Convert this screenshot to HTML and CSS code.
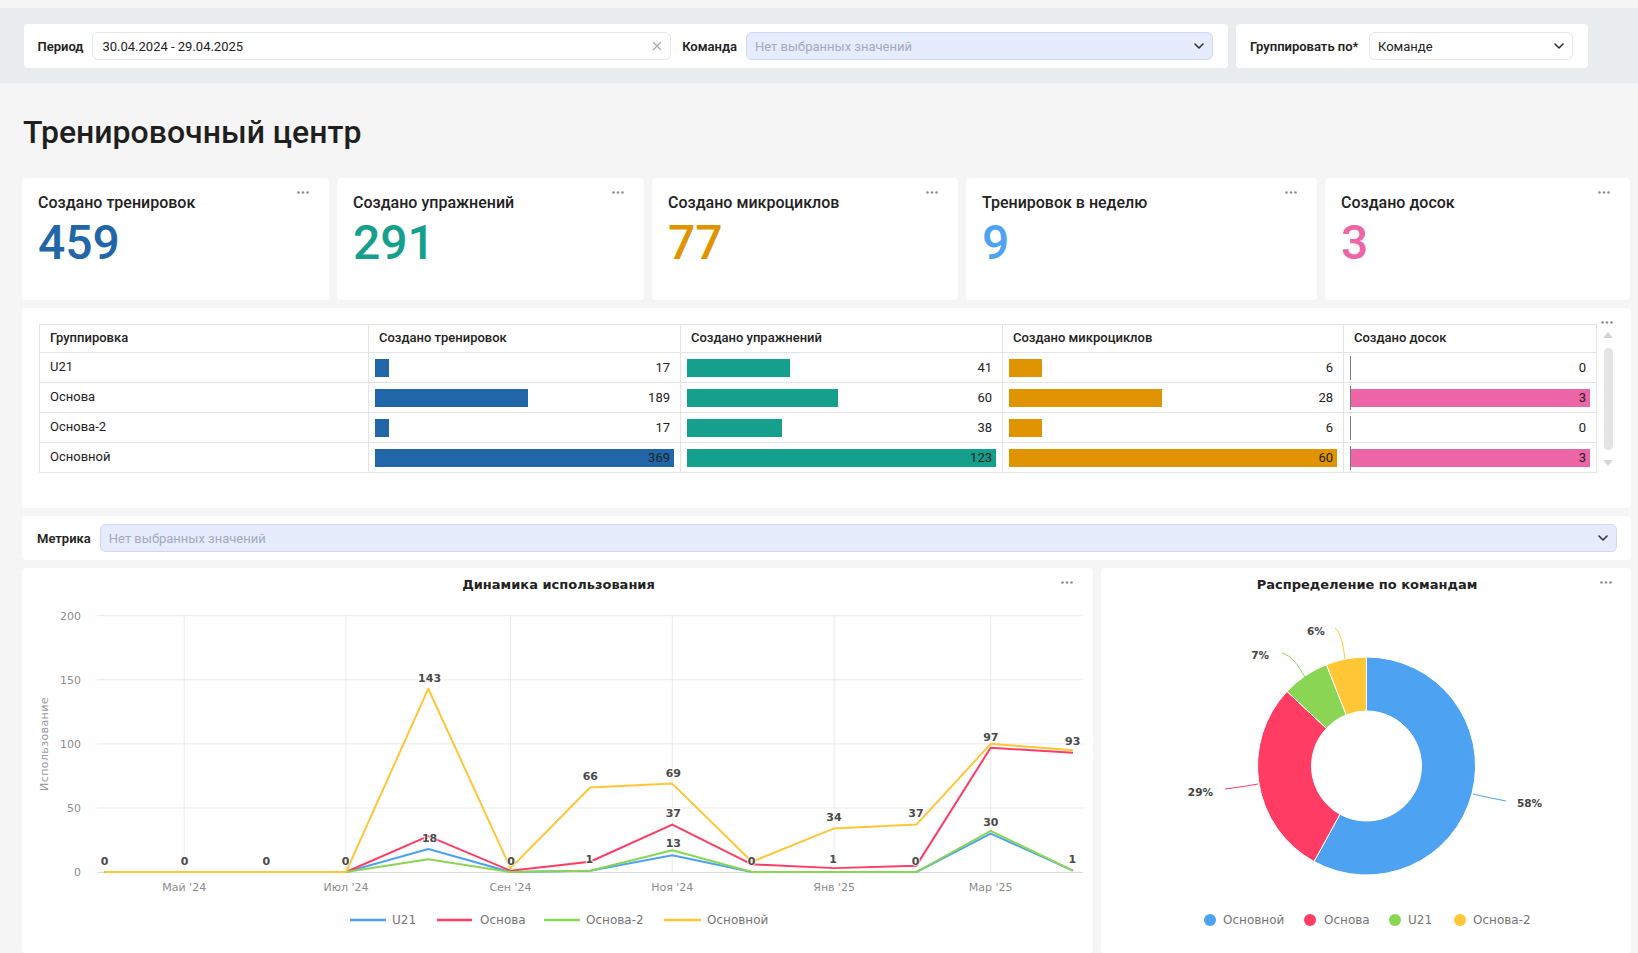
FILE: index.html
```html
<!DOCTYPE html>
<html lang="ru">
<head>
<meta charset="utf-8">
<title>Тренировочный центр</title>
<link rel="stylesheet" href="styles.css">
</head>
<body>
<header class="filters">
  <div class="fcard fcard-main">
    <span class="flabel">Период</span>
    <div class="input grow date"><span class="ival">30.04.2024 - 29.04.2025</span>
      <svg class="ico-x" viewBox="0 0 10 10" width="10" height="10"><path d="M1 1l8 8M9 1l-8 8"/></svg>
    </div>
    <span class="flabel">Команда</span>
    <div class="input select team"><span class="ph">Нет выбранных значений</span>
      <svg class="chev" viewBox="0 0 10 6" width="10" height="6"><path d="M1 1l4 4 4-4"/></svg>
    </div>
  </div>
  <div class="fcard fcard-group">
    <span class="flabel">Группировать по*</span>
    <div class="input group-sel"><span class="ival">Команде</span>
      <svg class="chev" viewBox="0 0 10 6" width="10" height="6"><path d="M1 1l4 4 4-4"/></svg>
    </div>
  </div>
</header>

<main class="main">
  <h1 class="page-title">Тренировочный центр</h1>

  <section class="kpis">
    <div class="card kpi"><div class="kpi-title">Создано тренировок</div><div class="kpi-value c-blue">459</div>
      <svg class="dots" viewBox="0 0 12 3" width="12" height="3"><circle cx="1.5" cy="1.5" r="1.3"/><circle cx="6" cy="1.5" r="1.3"/><circle cx="10.5" cy="1.5" r="1.3"/></svg></div>
    <div class="card kpi"><div class="kpi-title">Создано упражнений</div><div class="kpi-value c-teal">291</div>
      <svg class="dots" viewBox="0 0 12 3" width="12" height="3"><circle cx="1.5" cy="1.5" r="1.3"/><circle cx="6" cy="1.5" r="1.3"/><circle cx="10.5" cy="1.5" r="1.3"/></svg></div>
    <div class="card kpi"><div class="kpi-title">Создано микроциклов</div><div class="kpi-value c-orange">77</div>
      <svg class="dots" viewBox="0 0 12 3" width="12" height="3"><circle cx="1.5" cy="1.5" r="1.3"/><circle cx="6" cy="1.5" r="1.3"/><circle cx="10.5" cy="1.5" r="1.3"/></svg></div>
    <div class="card kpi"><div class="kpi-title">Тренировок в неделю</div><div class="kpi-value c-sky">9</div>
      <svg class="dots" viewBox="0 0 12 3" width="12" height="3"><circle cx="1.5" cy="1.5" r="1.3"/><circle cx="6" cy="1.5" r="1.3"/><circle cx="10.5" cy="1.5" r="1.3"/></svg></div>
    <div class="card kpi"><div class="kpi-title">Создано досок</div><div class="kpi-value c-pink">3</div>
      <svg class="dots" viewBox="0 0 12 3" width="12" height="3"><circle cx="1.5" cy="1.5" r="1.3"/><circle cx="6" cy="1.5" r="1.3"/><circle cx="10.5" cy="1.5" r="1.3"/></svg></div>
  </section>

  <section class="card table-card">
    <table class="grid">
      <colgroup><col class="w1"><col class="w2"><col class="w3"><col class="w4"><col class="w5"></colgroup>
      <thead>
        <tr><th>Группировка</th><th>Создано тренировок</th><th>Создано упражнений</th><th>Создано микроциклов</th><th>Создано досок</th></tr>
      </thead>
      <tbody>
        <tr><td class="name">U21</td>
          <td class="bc"><div class="bw"><span class="bar b-blue" style="width:4.61%"></span><span class="val">17</span></div></td>
          <td class="bc"><div class="bw"><span class="bar b-teal" style="width:33.33%"></span><span class="val">41</span></div></td>
          <td class="bc"><div class="bw"><span class="bar b-orange" style="width:10%"></span><span class="val">6</span></div></td>
          <td class="bc"><div class="bw axis"><span class="bar b-pink" style="width:0%"></span><span class="val">0</span></div></td></tr>
        <tr><td class="name">Основа</td>
          <td class="bc"><div class="bw"><span class="bar b-blue" style="width:51.22%"></span><span class="val">189</span></div></td>
          <td class="bc"><div class="bw"><span class="bar b-teal" style="width:48.78%"></span><span class="val">60</span></div></td>
          <td class="bc"><div class="bw"><span class="bar b-orange" style="width:46.67%"></span><span class="val">28</span></div></td>
          <td class="bc"><div class="bw axis"><span class="bar b-pink" style="width:100%"></span><span class="val">3</span></div></td></tr>
        <tr><td class="name">Основа-2</td>
          <td class="bc"><div class="bw"><span class="bar b-blue" style="width:4.61%"></span><span class="val">17</span></div></td>
          <td class="bc"><div class="bw"><span class="bar b-teal" style="width:30.89%"></span><span class="val">38</span></div></td>
          <td class="bc"><div class="bw"><span class="bar b-orange" style="width:10%"></span><span class="val">6</span></div></td>
          <td class="bc"><div class="bw axis"><span class="bar b-pink" style="width:0%"></span><span class="val">0</span></div></td></tr>
        <tr><td class="name">Основной</td>
          <td class="bc"><div class="bw"><span class="bar b-blue" style="width:100%"></span><span class="val">369</span></div></td>
          <td class="bc"><div class="bw"><span class="bar b-teal" style="width:100%"></span><span class="val">123</span></div></td>
          <td class="bc"><div class="bw"><span class="bar b-orange" style="width:100%"></span><span class="val">60</span></div></td>
          <td class="bc"><div class="bw axis"><span class="bar b-pink" style="width:100%"></span><span class="val">3</span></div></td></tr>
      </tbody>
    </table>
    <div class="scrollbar"><span class="arrow up"></span><span class="thumb"></span><span class="arrow down"></span></div>
    <svg class="dots dots-table" viewBox="0 0 12 3" width="12" height="3"><circle cx="1.5" cy="1.5" r="1.3"/><circle cx="6" cy="1.5" r="1.3"/><circle cx="10.5" cy="1.5" r="1.3"/></svg>
  </section>

  <section class="card fcard metric">
    <span class="flabel">Метрика</span>
    <div class="input select grow"><span class="ph">Нет выбранных значений</span>
      <svg class="chev" viewBox="0 0 10 6" width="10" height="6"><path d="M1 1l4 4 4-4"/></svg>
    </div>
  </section>

  <section class="charts">
    <div class="card chart-card">
      <svg class="chart" viewBox="-1 0 1071 385" width="1071" height="385">
        <text class="ctitle" x="535.5" y="21" text-anchor="middle">Динамика использования</text>
        <g transform="translate(0 47.7) scale(1 0.9934) translate(0 -48)">
          <path class="gridl" d="M74 241.5H1060M74 177H1060M74 112.5H1060M74 48H1060M161.2 48V306M323 48V306M487.5 48V306M649.3 48V306M811.2 48V306M967.7 48V306"/>
          <path class="axisl" d="M74 306.5H1060"/>
          <g class="ytick" text-anchor="end">
            <text x="58" y="310">0</text><text x="58" y="245.5">50</text><text x="58" y="181">100</text><text x="58" y="116.5">150</text><text x="58" y="52">200</text>
          </g>
          <polyline class="ln l-blue" points="81.6,306 161.2,306 243.4,306 323,306 405.3,282.8 487.5,306 567.1,304.7 649.3,289.2 728.9,306 811.2,306 893.4,306 967.7,267.3 1050,304.7"/>
          <polyline class="ln l-red" points="81.6,306 161.2,306 243.4,306 323,306 405.3,269.9 487.5,304.7 567.1,295.7 649.3,258.3 728.9,298.3 811.2,302.1 893.4,299.6 967.7,180.9 1050,186"/>
          <polyline class="ln l-green" points="81.6,306 161.2,306 243.4,306 323,306 405.3,293.1 487.5,306 567.1,304.7 649.3,284.1 728.9,306 811.2,306 893.4,306 967.7,264.7 1050,304.7"/>
          <polyline class="ln l-yellow" points="81.6,306 161.2,306 243.4,306 323,306 405.3,121.5 487.5,302.1 567.1,220.9 649.3,217 728.9,295.7 811.2,262.1 893.4,258.3 967.7,177 1050,183.4"/>
          <g class="dl" text-anchor="middle">
            <text x="81.6" y="298.6">0</text><text x="161.6" y="298.6">0</text><text x="243.4" y="298.6">0</text><text x="322.7" y="298.6">0</text>
            <text x="406.6" y="114.4">143</text><text x="406.6" y="275.5">18</text><text x="488" y="298.6">0</text>
            <text x="567.3" y="213.8">66</text><text x="566.3" y="297">1</text>
            <text x="650.3" y="210">69</text><text x="650.3" y="251">37</text><text x="650.3" y="281.2">13</text>
            <text x="728.5" y="298.6">0</text><text x="811" y="254.4">34</text><text x="810" y="297">1</text>
            <text x="893" y="251">37</text><text x="892.7" y="298.6">0</text>
            <text x="967.8" y="173.8">97</text><text x="967.8" y="260">30</text>
            <text x="1049.7" y="178.5">93</text><text x="1049.4" y="297">1</text>
          </g>
        </g>
        <g class="xtick" text-anchor="middle">
          <text x="161.2" y="323">Май '24</text><text x="323" y="323">Июл '24</text><text x="487.5" y="323">Сен '24</text>
          <text x="649.3" y="323">Ноя '24</text><text x="811.2" y="323">Янв '25</text><text x="967.7" y="323">Мар '25</text>
        </g>
        <text class="ytitle" transform="translate(25 176) rotate(-90)" text-anchor="middle">Использование</text>
        <g class="legend">
          <path class="lg l-blue" d="M327 352H363"/><text x="369" y="356">U21</text>
          <path class="lg l-red" d="M414 352H449"/><text x="457" y="356">Основа</text>
          <path class="lg l-green" d="M521 352H557"/><text x="563" y="356">Основа-2</text>
          <path class="lg l-yellow" d="M641 352H678"/><text x="684" y="356">Основной</text>
        </g>
      </svg>
      <svg class="dots" viewBox="0 0 12 3" width="12" height="3"><circle cx="1.5" cy="1.5" r="1.3"/><circle cx="6" cy="1.5" r="1.3"/><circle cx="10.5" cy="1.5" r="1.3"/></svg>
    </div>
    <div class="card chart-card">
      <svg class="chart" viewBox="-1 0 530 385" width="530" height="385">
        <text class="ctitle" x="265" y="21" text-anchor="middle">Распределение по командам</text>
        <g class="pie">
          <path class="s-blue" d="M264.5 89A109 109 0 1 1 212 293.5L238 246.2A55 55 0 1 0 264.5 143Z"/>
          <path class="s-red" d="M212 293.5A109 109 0 0 1 185 123.4L224.4 160.4A55 55 0 0 0 238 246.2Z"/>
          <path class="s-green" d="M185 123.4A109 109 0 0 1 224.4 96.7L244.3 146.9A55 55 0 0 0 224.4 160.4Z"/>
          <path class="s-yellow" d="M224.4 96.7A109 109 0 0 1 264.5 89L264.5 143A55 55 0 0 0 244.3 146.9Z"/>
        </g>
        <path class="lead l-blue" d="M371 226Q388 230 404 233"/>
        <path class="lead l-red" d="M156 216Q140 219 123 221"/>
        <path class="lead l-green" d="M203 109C195 96 190 88 180 85"/>
        <path class="lead l-yellow" d="M243 91C241 76 239 65 233 60"/>
        <g class="pl">
          <text x="415" y="239">58%</text>
          <text x="111" y="228" text-anchor="end">29%</text>
          <text x="167" y="91" text-anchor="end">7%</text>
          <text x="205" y="67">6%</text>
        </g>
        <g class="legend">
          <circle class="f-blue" cx="108" cy="352" r="6"/><text x="121" y="356">Основной</text>
          <circle class="f-red" cx="208" cy="352" r="6"/><text x="222" y="356">Основа</text>
          <circle class="f-green" cx="293" cy="352" r="6"/><text x="306" y="356">U21</text>
          <circle class="f-yellow" cx="358" cy="352" r="6"/><text x="371" y="356">Основа-2</text>
        </g>
      </svg>
      <svg class="dots dots-donut" viewBox="0 0 12 3" width="12" height="3"><circle cx="1.5" cy="1.5" r="1.3"/><circle cx="6" cy="1.5" r="1.3"/><circle cx="10.5" cy="1.5" r="1.3"/></svg>
    </div>
  </section>
</main>
</body>
</html>
```
FILE: styles.css
```css
* { box-sizing: border-box; }
html, body { margin: 0; padding: 0; overflow: hidden; }
body {
  background: #f5f5f5;
  font-family: Roboto, "Noto Sans", sans-serif;
  color: #222;
  height: 953px;
}

/* filter band */
.filters {
  margin-top: 8px;
  height: 75px;
  background: #e9ecef;
  padding: 16px 0 0 23.5px;
  display: flex;
  gap: 8px;
  align-items: flex-start;
}
.fcard {
  height: 44px;
  background: #fff;
  border-radius: 4px;
  display: flex;
  align-items: center;
}
.fcard-main { width: 1204.5px; padding: 0 15px 0 14px; }
.fcard-group { width: 352px; padding: 0 15px 0 14px; }
.flabel {
  font-size: 13px;
  font-weight: 600;
  color: #222;
  margin-right: 9px;
  white-space: nowrap;
}
.fcard-main .flabel + .input + .flabel { margin-left: 11px; }
.input {
  height: 28px;
  border: 1px solid #e6e6e6;
  border-radius: 6px;
  background: #fff;
  display: flex;
  align-items: center;
  justify-content: space-between;
  padding: 0 8px 0 8px;
  font-size: 13px;
}
.date { padding-left: 9px; }
.grow { flex: 1; }
.team { width: 467px; flex: none; }
.group-sel { width: 204px; flex: none; margin-left: auto; }
.select {
  background: #e6ecfc;
  border-color: #cfd7f2;
}
.ival { color: #222; }
.ph { color: #a3aabb; }
.ico-x path { stroke: #aaa; stroke-width: 1.3; fill: none; }
.chev path { stroke: #333; stroke-width: 1.6; fill: none; stroke-linecap: round; stroke-linejoin: round; }

/* main */
.main {
  margin-left: 22px;
  width: 1609px;
  display: flex;
  flex-direction: column;
  gap: 8px;
}
.page-title {
  margin: 29px 0 18px 1px;
  height: 40px;
  line-height: 40px;
  font-size: 32px;
  font-weight: 500;
  color: #1f1f1f;
}
.card {
  background: #fff;
  border-radius: 4px;
  position: relative;
}
.dots {
  position: absolute;
  top: 13px;
  right: 20px;
  fill: #8f8f8f;
}
.dots-table { right: 18px; top: 12.5px; }
.dots-donut { right: 19px; }

/* KPI */
.kpis {
  display: grid;
  grid-template-columns: 307px 307px 306px 351px 305px;
  gap: 8px;
  height: 122px;
}
.kpi { padding: 14.5px 15px 0 16px; }
.kpi-title {
  font-size: 16px;
  line-height: 20px;
  font-weight: 500;
  color: #222;
}
.kpi-value {
  margin-top: 6px;
  font-size: 48px;
  line-height: 48px;
  font-weight: 500;
}
.c-blue { color: #2166a8; }
.c-teal { color: #14a08c; }
.c-orange { color: #e09400; }
.c-sky { color: #4da2f1; }
.c-pink { color: #ec65a6; }

/* table */
.table-card {
  height: 200px;
  display: flex;
  align-items: flex-start;
  padding: 16px 0 0 17px;
}
.grid {
  border-collapse: collapse;
  table-layout: fixed;
  width: 1557px;
  font-size: 13px;
}
.w1 { width: 329px; } .w2 { width: 312px; } .w3 { width: 322px; } .w4 { width: 341px; } .w5 { width: 253px; }
.grid th, .grid td { border: 1px solid #e4e4e4; }
.grid th {
  height: 28px;
  text-align: left;
  font-weight: 500;
  padding: 0 10px 2px;
  color: #222;
}
.grid td { height: 30px; padding: 0 6px; color: #333; }
.grid td.name { padding: 0 10px 2px; color: #222; }
.bw {
  display: grid;
  height: 18px;
  align-items: center;
}
.bw .bar { grid-area: 1 / 1; height: 18px; justify-self: start; }
.bw .val { grid-area: 1 / 1; justify-self: end; padding-right: 4px; line-height: 18px; color: #222; }
.bw.axis { height: 24px; border-left: 1px solid #7a7a7a; }
.b-blue { background: #2166a8; }
.b-teal { background: #14a08c; }
.b-orange { background: #e09400; }
.b-pink { background: #ec65a6; }
.scrollbar {
  margin-left: 6px;
  width: 10px;
  padding-top: 8px;
  display: flex;
  flex-direction: column;
  align-items: center;
  gap: 10px;
}
.arrow { width: 0; height: 0; border-left: 5px solid transparent; border-right: 5px solid transparent; }
.arrow.up { border-bottom: 6px solid #d4d4d4; }
.arrow.down { border-top: 6px solid #d4d4d4; }
.thumb { width: 9px; height: 102px; border-radius: 5px; background: #e4e4e4; }

/* metric filter */
.metric { padding: 0 14px 0 15px; }

/* charts */
.charts {
  display: grid;
  grid-template-columns: 1071px 530px;
  gap: 8px;
  height: 385px;
}
.chart-card { overflow: hidden; }
.chart { display: block; font-family: "DejaVu Sans", Verdana, sans-serif; }
.ctitle { font-size: 13px; font-weight: bold; fill: #222; }
.gridl { stroke: #ebebeb; stroke-width: 1; fill: none; }
.axisl { stroke: #dcdcdc; stroke-width: 1; fill: none; }
.ytick text, .xtick text { font-size: 11px; fill: #8c8c8c; }
.ytitle { font-size: 11px; fill: #9a9a9a; letter-spacing: 0.4px; }
.ln { fill: none; stroke-width: 2; stroke-linejoin: round; }
.l-blue { stroke: #4da2f1; }
.l-red { stroke: #ff3d64; }
.l-green { stroke: #8ad554; }
.l-yellow { stroke: #ffc636; }
.dl text {
  font-size: 11px;
  font-weight: bold;
  fill: #4a4a4a;
  stroke: #fff;
  stroke-width: 2px;
  stroke-opacity: 0.8;
  paint-order: stroke;
}
.legend text { font-size: 12px; fill: #757575; }
.lg { stroke-width: 2.5; fill: none; }
.pie path { stroke: #fff; stroke-width: 1; }
.s-blue { fill: #4da2f1; }
.s-red { fill: #ff3d64; }
.s-green { fill: #8ad554; }
.s-yellow { fill: #ffc636; }
.lead { fill: none; stroke-width: 1; }
.pl text { font-size: 10.5px; font-weight: bold; fill: #444; }
.f-blue { fill: #4da2f1; }
.f-red { fill: #ff3d64; }
.f-green { fill: #8ad554; }
.f-yellow { fill: #ffc636; }
```
